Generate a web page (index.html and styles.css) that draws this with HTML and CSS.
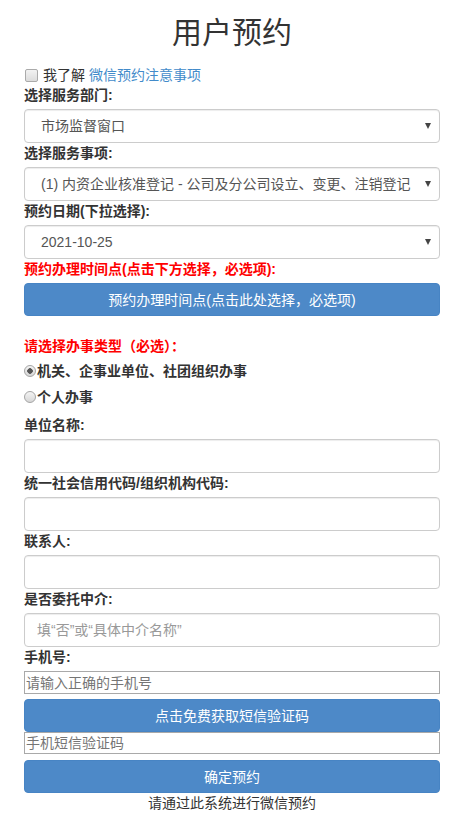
FILE: index.html
```html
<!DOCTYPE html>
<html>
<head>
  <meta charset="utf-8">
  <title>用户预约</title>
  <link rel="stylesheet" href="styles.css">
</head>
<body>
<div class="page">

  <h1 class="title">用户预约</h1>

  <div class="agree">
    <input type="checkbox" class="check" id="agree">
    <label for="agree">我了解 <a href="#">微信预约注意事项</a></label>
  </div>

  <label class="lbl">选择服务部门:</label>
  <div class="sel">
    <select><option>市场监督窗口</option></select>
  </div>

  <label class="lbl">选择服务事项:</label>
  <div class="sel">
    <select><option>(1) 内资企业核准登记 - 公司及分公司设立、变更、注销登记</option></select>
  </div>

  <label class="lbl">预约日期(下拉选择):</label>
  <div class="sel">
    <select><option>2021-10-25</option></select>
  </div>

  <label class="lbl red">预约办理时间点(点击下方选择，必选项):</label>
  <button class="btn">预约办理时间点(点击此处选择，必选项)</button>

  <div class="red type">请选择办事类型（必选）：</div>
  <div class="radios">
    <label class="radio"><input type="radio" name="kind" checked>机关、企事业单位、社团组织办事</label>
    <label class="radio"><input type="radio" name="kind">个人办事</label>
  </div>

  <label class="lbl">单位名称:</label>
  <input class="field" type="text">

  <label class="lbl">统一社会信用代码/组织机构代码:</label>
  <input class="field" type="text">

  <label class="lbl">联系人:</label>
  <input class="field" type="text">

  <label class="lbl">是否委托中介:</label>
  <input class="field" type="text" placeholder="填“否”或“具体中介名称”">

  <label class="lbl">手机号:</label>
  <input class="plain" type="text" placeholder="请输入正确的手机号">
  <button class="btn sms">点击免费获取短信验证码</button>
  <input class="plain code" type="text" placeholder="手机短信验证码">
  <button class="btn ok">确定预约</button>

  <div class="foot">请通过此系统进行微信预约</div>

</div>
</body>
</html>
```

FILE: styles.css
```css
body {margin:0; background:#fff; color:#333; font:14px/20px "Liberation Sans", "Noto Sans CJK SC", sans-serif;}
.page {padding:0 16px 0 24px; display:flex; flex-direction:column;}
.title {margin:16px 0 15px; font-size:30px; line-height:34px; font-weight:normal; text-align:center;}
.agree {display:flex; align-items:center; height:20px;}
.agree a {color:#428bca; text-decoration:none;}
.check {-webkit-appearance:none; appearance:none; width:13px; height:13px; margin:0 5px 0 1px; border:1px solid #aaa; border-radius:2px; background:linear-gradient(#f2f2f2, #dcdcdc);}
.lbl {display:block; font-weight:bold; margin-bottom:4px;}
.red {color:#f00; font-weight:bold;}
.sel {position:relative;}
.sel select {-webkit-appearance:none; appearance:none; width:100%; height:34px; padding:0 28px 0 16px; border:1px solid #ccc; border-radius:4px; background:#fff; color:#555; font:inherit; box-shadow:inset 0 1px 1px rgba(0,0,0,.075);}
.sel:after {content:""; position:absolute; right:9px; top:14px; border-left:3px solid transparent; border-right:3px solid transparent; border-top:6px solid #444;}
.btn {display:block; width:100%; height:33px; padding:0; border:1px solid #4784c4; border-radius:4px; background:#4d89c8; color:#fff; font:inherit; cursor:pointer;}
.type {margin-top:20px;}
.radios {display:flex; flex-direction:column; gap:6px; margin:5px 0 8px;}
.radio {display:flex; align-items:center; font-weight:bold;}
.radio input {-webkit-appearance:none; appearance:none; width:12px; height:12px; margin:0 1px 0 0; border:1px solid #a5a5a5; border-radius:50%; background:linear-gradient(#f4f4f4, #d6d6d6);}
.radio input:checked {background:radial-gradient(circle, #555 0, #555 2.5px, transparent 3px), linear-gradient(#f4f4f4, #d6d6d6);}
.field {box-sizing:border-box; width:100%; height:34px; padding:0 12px; border:1px solid #ccc; border-radius:4px; font:inherit; color:#555; box-shadow:inset 0 1px 1px rgba(0,0,0,.075);}
.field::placeholder {color:#999;}
.plain {box-sizing:border-box; width:100%; height:23px; margin:0; padding:0 1px; border:1px solid #a9a9a9; border-radius:0; font:inherit; color:#333;}
.plain::placeholder {color:#757575;}
.sms {margin-top:5px;}
.code {height:22px;}
.ok {margin-top:6px;}
.foot {text-align:center;}
```
